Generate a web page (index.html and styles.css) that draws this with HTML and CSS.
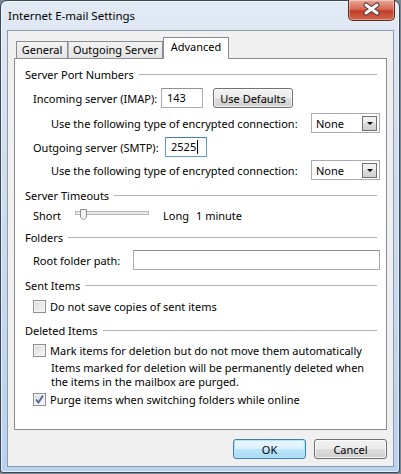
FILE: index.html
```html
<!DOCTYPE html>
<html lang="en">

<head>
    <meta charset="UTF-8">
    <title>Internet E-mail Settings</title>
    <link rel="stylesheet" href="styles.css">
</head>

<body>
    <div class="window">
        <div class="titlebar">
            <span class="title">Internet E-mail Settings</span>
            <div class="close">
                <svg width="45" height="19" viewBox="0 0 45 19">
                    <path d="M17 5 L28 13 M28 5 L17 13" stroke="#4b3a3a" stroke-width="5" stroke-linecap="round" />
                    <path d="M17 5 L28 13 M28 5 L17 13" stroke="#fff" stroke-width="3" stroke-linecap="round" />
                </svg>
            </div>
        </div>

        <div class="client">
            <div class="tabs">
                <div class="tab tab-general">General</div>
                <div class="tab tab-outgoing">Outgoing Server</div>
                <div class="tab tab-advanced active">Advanced</div>
            </div>

            <div class="page">
                <div class="group-title"><span>Server Port Numbers</span><i></i></div>
                <div class="row row-imap">
                    <span class="lbl-imap">Incoming server (IMAP):</span>
                    <div class="textbox port">143</div>
                    <button class="btn btn-defaults">Use Defaults</button>
                </div>
                <div class="row sub row-enc1">
                    <span>Use the following type of encrypted connection:</span>
                    <div class="select"><span>None</span><b></b></div>
                </div>
                <div class="row row-smtp">
                    <span class="lbl-smtp">Outgoing server (SMTP):</span>
                    <div class="textbox port focused">2525<em class="caret"></em></div>
                </div>
                <div class="row sub row-enc2">
                    <span>Use the following type of encrypted connection:</span>
                    <div class="select"><span>None</span><b></b></div>
                </div>

                <div class="group-title gt-timeouts"><span>Server Timeouts</span><i></i></div>
                <div class="row row-slider">
                    <span class="short">Short</span>
                    <svg class="slider" width="74" height="16" viewBox="0 0 74 16">
                        <rect x="0.5" y="4.5" width="73" height="3" fill="#e7eaea" stroke="#b7b9bb" />
                        <path d="M5.5 2.5 H11.5 V10 L8.5 13 L5.5 10 Z" fill="#f4f4f4" stroke="#8b8f94" />
                    </svg>
                    <span class="long">Long</span>
                    <span class="minute">1 minute</span>
                </div>

                <div class="group-title gt-folders"><span>Folders</span><i></i></div>
                <div class="row row-root">
                    <span>Root folder path:</span>
                    <div class="textbox root"></div>
                </div>

                <div class="group-title gt-sent"><span>Sent Items</span><i></i></div>
                <div class="row check-row cr-sent">
                    <span class="check"></span>
                    <span>Do not save copies of sent items</span>
                </div>

                <div class="group-title gt-deleted"><span>Deleted Items</span><i></i></div>
                <div class="row check-row cr-mark">
                    <span class="check"></span>
                    <span>Mark items for deletion but do not move them automatically</span>
                </div>
                <p class="note">Items marked for deletion will be permanently deleted when<br>the items in the mailbox are purged.</p>
                <div class="row check-row cr-purge">
                    <span class="check checked">
                        <svg width="11" height="11" viewBox="0 0 11 11">
                            <path d="M2 5.5 L4.5 8.5 L9 1.5" fill="none" stroke="#4d64a4" stroke-width="1.8" />
                        </svg>
                    </span>
                    <span>Purge items when switching folders while online</span>
                </div>
            </div>

            <div class="buttons">
                <button class="btn btn-dialog default">OK</button>
                <button class="btn btn-dialog">Cancel</button>
            </div>
        </div>
    </div>
</body>

</html>
```

FILE: styles.css
```css
* {
    box-sizing: border-box;
}

body {
    margin: 0;
    background: #7c8794;
    font-family: "Noto Sans", sans-serif;
    font-size: 11px;
    color: #000;
    white-space: nowrap;
}

.window {
    width: 400px;
    height: 473px;
    display: flex;
    flex-direction: column;
    border: 1px solid #39475a;
    border-radius: 7px 7px 3px 3px;
    background: linear-gradient(#e2eaf4, #d2e0f0 120px, #b9d2ef);
    box-shadow: inset 0 0 0 1px rgba(255, 255, 255, 0.6);
}

/* title bar */
.titlebar {
    height: 29px;
    display: flex;
    align-items: flex-start;
    padding-left: 7px;
}

.title {
    margin-top: 7px;
    line-height: 15px;
    font-size: 11.5px;
}

.close {
    margin-left: auto;
    margin-right: 4px;
    margin-top: -1px;
    width: 47px;
    height: 21px;
    border: 1px solid #5e2a22;
    border-top: none;
    border-radius: 0 0 5px 5px;
    background: linear-gradient(#e9a899, #d66a55 45%, #c13e27 55%, #d2664e);
    box-shadow: inset 0 0 0 1px rgba(255, 255, 255, 0.35);
}

.close svg {
    display: block;
}

/* client area */
.client {
    flex: 1;
    margin: 0 5px 5px 6px;
    border: 1px solid #8d9aaa;
    background: #f0f0f0;
    padding: 7px 6px 0 6px;
    display: flex;
    flex-direction: column;
}

.tabs {
    display: flex;
    align-items: flex-end;
    height: 21px;
    margin-bottom: -1px;
    padding-left: 2px;
    position: relative;
    z-index: 1;
}

.tab {
    height: 17px;
    border: 1px solid #898c95;
    border-bottom: none;
    background: linear-gradient(#f2f2f2, #e4e4e4);
    text-align: center;
    line-height: 16px;
    margin-bottom: 1px;
}

.tab-general {
    width: 52px;
}

.tab-outgoing {
    width: 95px;
    border-left-color: #b0b3b9;
}

.tab-advanced {
    width: 66px;
}

.tab.active {
    height: 22px;
    margin-bottom: 0;
    background: #fff;
    line-height: 17px;
}

.page {
    height: 372px;
    border: 1px solid #898c95;
    background: #fff;
    padding: 7px 9px 0 10px;
    display: flex;
    flex-direction: column;
}

/* group headings */
.group-title {
    display: flex;
    align-items: center;
    height: 16px;
}

.group-title i {
    flex: 1;
    margin-left: 5px;
    border-top: 1px solid #b0b5bb;
}

.gt-timeouts {
    margin-top: 7px;
}

.gt-folders {
    margin-top: 6px;
}

.gt-sent {
    margin-top: 7px;
}

.gt-deleted {
    margin-top: 8px;
}

/* rows */
.row {
    display: flex;
    align-items: center;
    padding-left: 8px;
    height: 20px;
}

.row.sub {
    padding-left: 26px;
}

.row-imap {
    margin-top: 6px;
}

.row-enc1 {
    margin-top: 5px;
}

.row-smtp {
    margin-top: 4px;
}

.row-enc2 {
    margin-top: 3px;
}

.lbl-imap {
    width: 128px;
}

.lbl-smtp {
    width: 132px;
}

.textbox {
    height: 20px;
    border: 1px solid #abadb3;
    border-top-color: #8e9096;
    background: #fff;
    padding: 0 5px;
    line-height: 18px;
}

.textbox.port {
    width: 42px;
}

.textbox.focused {
    border-color: #5d9bd8;
    border-top-color: #3d7bc2;
}

.caret {
    display: inline-block;
    width: 1px;
    height: 14px;
    margin-left: 1px;
    background: #000;
    vertical-align: -3px;
}

.btn {
    font-family: inherit;
    font-size: 11px;
    color: #000;
    height: 20px;
    padding: 0;
    border: 1px solid #707070;
    border-radius: 3px;
    background: linear-gradient(#f2f2f2, #ebebeb 50%, #dddddd 50%, #cfcfcf);
    box-shadow: inset 0 0 0 1px rgba(255, 255, 255, 0.7);
}

.btn-defaults {
    width: 80px;
    margin-left: 10px;
}

.select {
    margin-left: auto;
    margin-right: -3px;
    width: 69px;
    height: 20px;
    border: 1px solid #a5acb5;
    background: #fff;
    display: flex;
    align-items: center;
    padding: 0 2px 0 4px;
}

.select span {
    flex: 1;
}

.select b {
    width: 15px;
    height: 15px;
    border: 1px solid #707070;
    background: linear-gradient(#f2f2f2, #ebebeb 50%, #dddddd 50%, #cfcfcf);
    position: relative;
}

.select b::after {
    content: "";
    position: absolute;
    left: 4px;
    top: 5px;
    border-left: 3px solid transparent;
    border-right: 3px solid transparent;
    border-top: 3px solid #000;
}

/* slider */
.row-slider {
    margin-top: 4px;
    height: 16px;
}

.short {
    width: 42px;
}

.slider {
    display: block;
}

.long {
    margin-left: 14px;
}

.minute {
    margin-left: 7px;
}

.row-root {
    margin-top: 5px;
}

.textbox.root {
    margin-left: auto;
    margin-right: -3px;
    width: 247px;
    height: 20px;
}

/* check boxes */
.check-row {
    height: 16px;
    margin-top: 4px;
}

.cr-sent {
    margin-top: 5px;
}

.cr-purge {
    margin-top: 2px;
}

.check {
    width: 13px;
    height: 13px;
    border: 1px solid #8e8f8f;
    background: linear-gradient(135deg, #dcdcdc, #f6f6f6);
    box-shadow: inset 0 0 0 1px #f4f4f4;
    margin-right: 4px;
    display: flex;
    align-items: center;
    justify-content: center;
}

.check svg {
    display: block;
}

.note {
    margin: 3px 0 0 0;
    padding-left: 26px;
    line-height: 14px;
}

/* dialog buttons */
.buttons {
    display: flex;
    justify-content: flex-end;
    gap: 8px;
    margin-top: 9px;
}

.btn-dialog {
    width: 73px;
}

.btn-dialog.default {
    border-color: #3c7fb1;
    box-shadow: inset 0 0 0 1px #b6e5f8;
    background: linear-gradient(#eaf6fd, #d9f0fc 50%, #bee6fd 50%, #a7d9f5);
}
```
